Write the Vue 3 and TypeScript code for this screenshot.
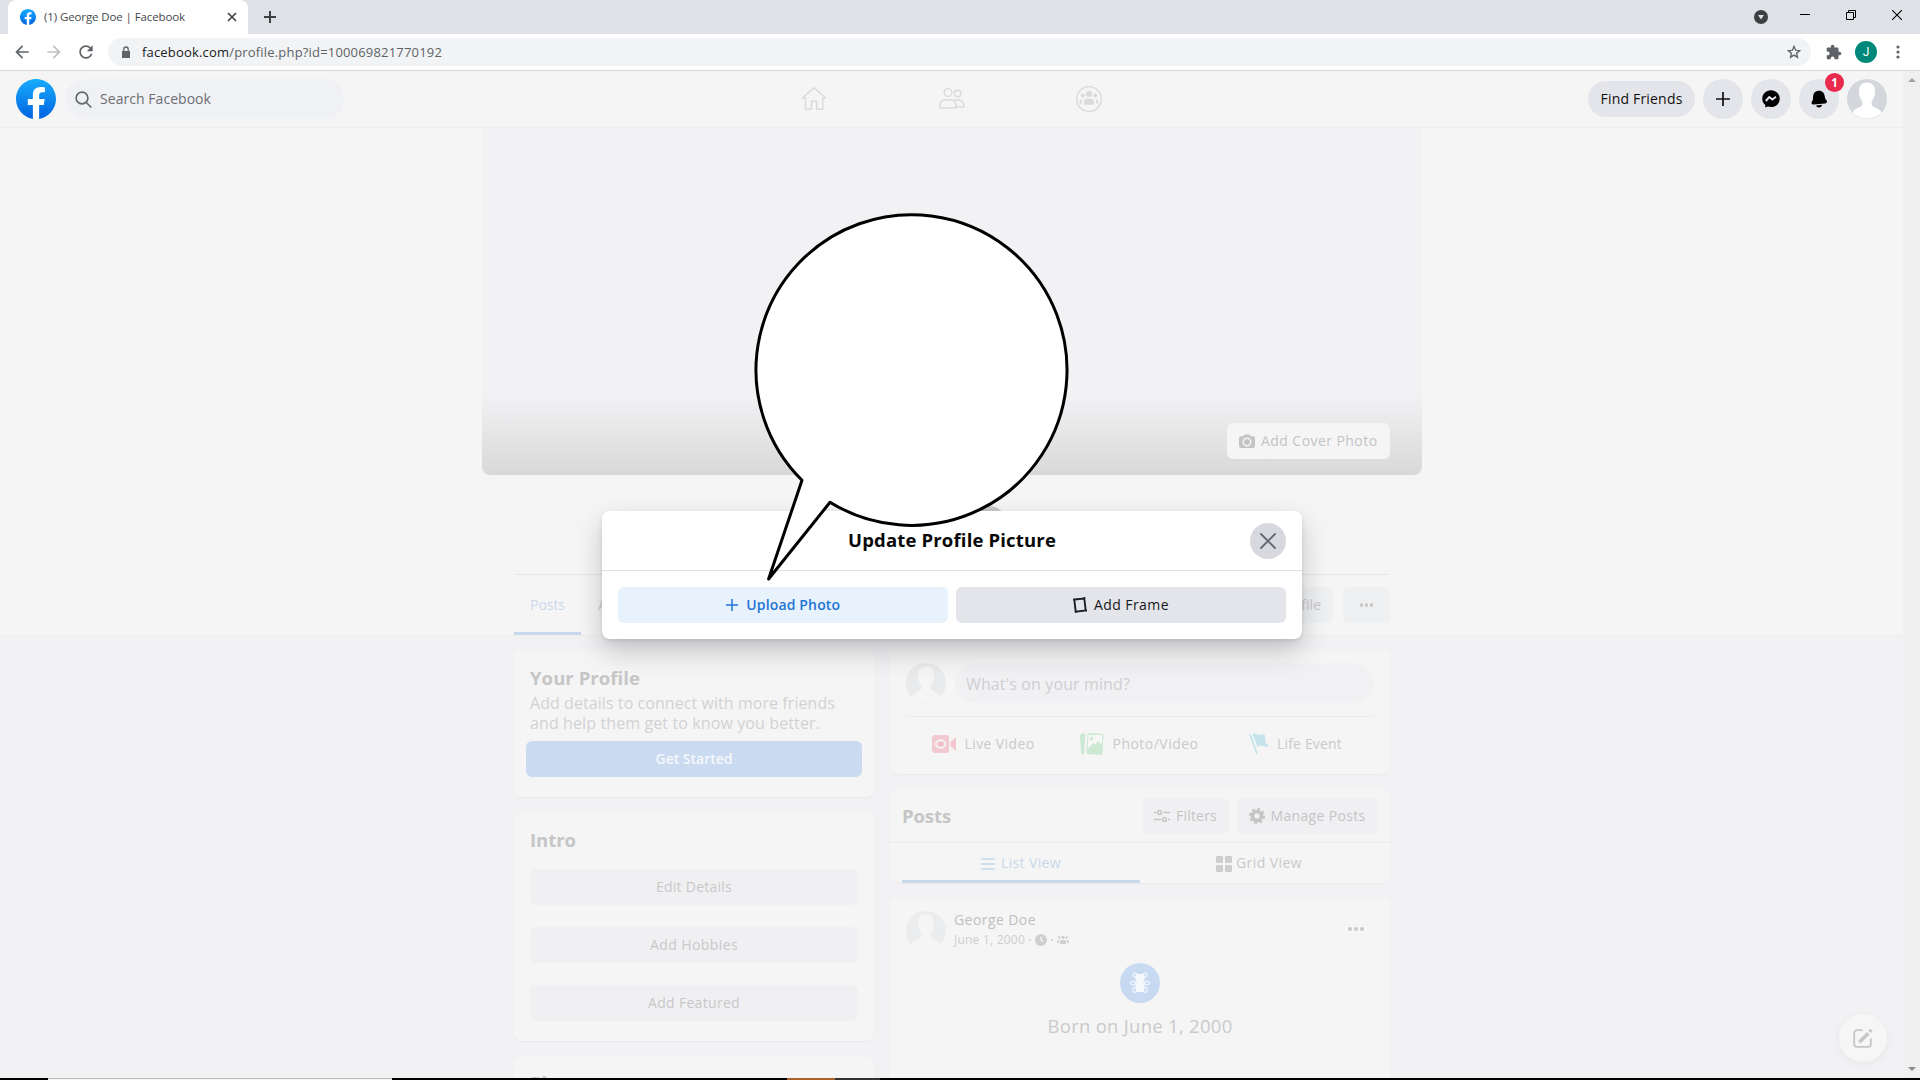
<script setup lang="ts">
interface Binding {
  value: number
}

// Tracks a label out (or in) so that it fills its designed width.
const vFit = {
  mounted(el: HTMLElement, binding: Binding) {
    const natural = el.getBoundingClientRect().width
    const count = (el.textContent ?? '').length
    if (count > 0) el.style.letterSpacing = `${(binding.value - natural) / count}px`
  },
}

const introActions = [
  { label: 'Edit Details', width: 76 },
  { label: 'Add Hobbies', width: 88 },
  { label: 'Add Featured', width: 92 },
]

const silhouette =
  'M20 3.5c-5 0-8 3-8 8.500 0 5.500 1.800 8.500 3.300 10.500 .5 3.500-.6 5-4 6.300-2.800 1.200-5 2.600-5.800 4.700a20 20 0 0 0 29 0c-.8-2.100-3-3.500-5.800-4.700-3.400-1.300-4.500-2.800-4-6.300 1.500-2 3.300-5 3.300-10.500 0-5.500-3-8.500-8-8.500z'
const fbMark =
  'M24 12.073c0-6.627-5.373-12-12-12s-12 5.373-12 12c0 5.990 4.388 10.954 10.125 11.854v-8.385H7.078v-3.470h3.047V9.430c0-3.007 1.792-4.669 4.533-4.669 1.312 0 2.686.235 2.686.235v2.953H15.830c-1.491 0-1.956.925-1.956 1.874v2.250h3.328l-.532 3.470h-2.796v8.385C19.612 23.027 24 18.062 24 12.073z'
</script>

<template>
  <div class="screen">
    <svg width="0" height="0" class="defs">
      <defs>
        <linearGradient id="fbg" x1="0" y1="0" x2="0" y2="1">
          <stop offset="0" stop-color="#18acfe" />
          <stop offset="1" stop-color="#0163e0" />
        </linearGradient>
      </defs>
    </svg>

    <div class="tabstrip">
      <div class="tab">
        <svg class="favicon" width="16" height="16" viewBox="0 0 24 24"><path fill="url(#fbg)" :d="fbMark" /></svg>
        <span v-fit="141" class="tab-title">(1) George Doe | Facebook</span>
        <svg class="tab-x" width="10" height="10" viewBox="0 0 10 10"><path d="M1 1l8 8M9 1l-8 8" stroke="#3c4043" stroke-width="1.600" /></svg>
      </div>
      <svg class="newtab" width="12" height="12" viewBox="0 0 12 12"><path d="M6 0v12M0 6h12" stroke="#3c4043" stroke-width="2" /></svg>
      <div class="window-buttons">
        <svg width="14" height="14" viewBox="0 0 14 14" class="w-drop"><circle cx="7" cy="7" r="7" fill="#3c4043" /><path d="M4 5h6L7 9.500z" fill="#dee1e6" /></svg>
        <svg width="10" height="10" viewBox="0 0 10 10" class="w-min"><path d="M0 4.500h10" stroke="#000" /></svg>
        <svg width="10" height="10" viewBox="0 0 10 10" class="w-max"><path d="M.5 2.500h7v7h-7zM2.500 2.500v-2h7v7h-2" fill="none" stroke="#000" /></svg>
        <svg width="10" height="10" viewBox="0 0 10 10" class="w-close"><path d="M0 0l10 10M10 0L0 10" stroke="#000" stroke-width="1.100" /></svg>
      </div>
    </div>

    <div class="toolbar">
      <svg class="t-back" width="20" height="20" viewBox="0 0 24 24" fill="#5f6368"><path d="M20 11H7.830l5.590-5.590L12 4l-8 8 8 8 1.410-1.410L7.830 13H20z" /></svg>
      <svg class="t-fwd" width="20" height="20" viewBox="0 0 24 24" fill="#bdc0c3"><path d="M4 11h12.170l-5.590-5.590L12 4l8 8-8 8-1.410-1.410L16.170 13H4z" /></svg>
      <svg class="t-reload" width="20" height="20" viewBox="0 0 24 24" fill="#5f6368"><path d="M17.650 6.350C16.200 4.900 14.210 4 12 4c-4.420 0-7.990 3.580-7.990 8s3.570 8 7.990 8c3.730 0 6.840-2.550 7.730-6h-2.080c-.82 2.330-3.040 4-5.650 4-3.310 0-6-2.690-6-6s2.690-6 6-6c1.660 0 3.140.69 4.220 1.780L13 11h7V4l-2.350 2.350z" /></svg>
      <div class="omnibox">
        <svg width="10" height="12" viewBox="0 0 10 12"><path d="M1 5h8v7H1z" fill="#5f6368" /><path d="M2.800 5V3.200a2.200 2.200 0 0 1 4.400 0V5" fill="none" stroke="#5f6368" stroke-width="1.300" /></svg>
        <span v-fit="300" class="url"><b>facebook.com</b>/profile.php?id=100069821770192</span>
        <svg class="star" width="16" height="16" viewBox="0 0 24 24" fill="#5f6368"><path fill-rule="evenodd" d="M23 9.240l-7.800-.62L12 1 8.800 8.630 1 9.240l6 5L5.200 22 12 17.870 18.800 22 17 14.240zM12 15.400l-3.760 2.270 1-4.280-3.320-2.880 4.380-.38L12 6.100l1.710 4.040 4.380.38-3.320 2.880 1 4.280z" /></svg>
      </div>
      <svg class="t-ext" width="16" height="16" viewBox="1 0 23 23" fill="#5f6368"><path d="M20.500 11H19V7c0-1.100-.9-2-2-2h-4V3.500C13 2.120 11.880 1 10.500 1S8 2.120 8 3.500V5H4c-1.100 0-1.990.9-1.990 2v3.800H3.500c1.490 0 2.700 1.210 2.700 2.700s-1.210 2.700-2.700 2.700H2V20c0 1.100.9 2 2 2h3.800v-1.500c0-1.490 1.210-2.700 2.700-2.700 1.490 0 2.700 1.210 2.700 2.700V22H17c1.100 0 2-.9 2-2v-4h1.500c1.380 0 2.500-1.120 2.500-2.500S21.880 11 20.500 11z" /></svg>
      <span class="profile-j">J</span>
      <svg class="t-menu" width="4" height="14" viewBox="0 0 4 14" fill="#5f6368"><circle cx="2" cy="2" r="1.600" /><circle cx="2" cy="7" r="1.600" /><circle cx="2" cy="12" r="1.600" /></svg>
    </div>

    <div class="viewport">
      <div class="page">
        <header class="topbar">
          <svg class="logo" width="40" height="40" viewBox="0 0 24 24"><circle cx="12" cy="12" r="11.500" fill="#fff" /><path fill="url(#fbg)" :d="fbMark" /></svg>
          <div class="search">
            <svg width="17" height="17" viewBox="0 0 17 17" fill="none" stroke="#65676b" stroke-width="1.700" stroke-linecap="round"><circle cx="7" cy="7" r="5.900" /><path d="M11.300 11.500l4.500 4.500" /></svg>
            <span v-fit="111">Search Facebook</span>
          </div>
          <nav class="nav" aria-label="Main">
            <svg width="26" height="26" viewBox="0 0 26 26" fill="none" stroke="#dadada" stroke-width="1.500" stroke-linejoin="round"><path d="M13 1.800L1.500 12h3v11.200h6v-8h5.200v8h6V12h3z" /></svg>
            <svg width="26" height="26" viewBox="0 0 26 26" fill="none" stroke="#dadada" stroke-width="1.400"><circle cx="9" cy="6.500" r="3.900" /><circle cx="18.700" cy="7.500" r="3.200" /><path d="M1 22c-.6-5.500 1.500-8.300 5-8.300h6c3.500 0 5.400 3 5 8.300zM15.500 14h4c3.800 0 5.700 2.500 5.300 7H17" /></svg>
            <svg width="28" height="28" viewBox="0 0 28 28"><circle cx="14" cy="14" r="12.400" fill="none" stroke="#dadada" stroke-width="1.400" /><g fill="#dadada"><circle cx="14" cy="9" r="3" /><circle cx="7.800" cy="10.500" r="2" /><circle cx="20.200" cy="10.500" r="2" /><path d="M9 19.800c-.6-4 .9-6 3-6h4c2.100 0 3.600 2 3 6zM4.700 18.500c-.4-3 .8-4.500 2.800-4.300-.8 1.200-1 2.600-.8 4.800zM23.300 18.500c.4-3-.8-4.500-2.800-4.300.8 1.200 1 2.600.8 4.800z" /></g></svg>
          </nav>
          <div class="account">
            <span class="find"><span v-fit="82">Find Friends</span></span>
            <span class="round"><svg width="14" height="14" viewBox="0 0 14 14"><path d="M7 0v14M0 7h14" stroke="#111" stroke-width="1.700" /></svg></span>
            <span class="round"><svg width="18" height="18" viewBox="0 0 18 18"><path d="M9 .3C4 .3.300 4 .3 8.700c0 2.700 1.100 4.800 3 6.400v2.500l2.600-1.100c1 .3 2 .5 3.100.5 5 0 8.700-3.600 8.700-8.300S14 .3 9 .3z" fill="#000" /><path d="M3.800 11l3.500-4 3 2.400L14 6.700" fill="none" stroke="#e4e6eb" stroke-width="1.900" stroke-linejoin="round" /></svg></span>
            <span class="round"><svg width="18" height="18" viewBox="0 0 18 18"><path d="M3 7.500C3 3.500 5.300.8 9 .8c3.400 0 5.500 2.300 5.800 5.700.2 2 .8 2.700 1.700 3.700 1 1.200.3 3-1.300 3.200L3.600 14.600C1.800 14.800.9 13 1.900 11.600 2.800 10.400 3 9.300 3 7.500zM6 15.400l6-.7c-.1 1.500-1.300 2.700-3 2.700-1.600 0-2.600-.8-3-2z" fill="#000" /></svg><i class="badge">1</i></span>
            <svg width="40" height="40" viewBox="0 0 40 40"><circle cx="20" cy="20" r="20" fill="#d3d6db" /><path :d="silhouette" fill="#fff" /></svg>
          </div>
        </header>

        <section class="profile">
          <div class="cover">
            <div class="cover-btn">
              <svg width="16" height="15" viewBox="0 0 16 15"><path fill-rule="evenodd" d="M5.500.5h5l1.300 1.700H14a2 2 0 0 1 2 2V12a2 2 0 0 1-2 2H2a2 2 0 0 1-2-2V4.200a2 2 0 0 1 2-2h2.200zM8 3.500a4.500 4.500 0 1 0 0 9 4.500 4.500 0 0 0 0-9z" fill="#c4c4c5" /><circle cx="8" cy="8" r="3" fill="#c4c4c5" /></svg>
              <span v-fit="116.500">Add Cover Photo</span>
            </div>
          </div>
          <div class="profile-head"><i class="cam-badge"></i></div>
          <div class="tabs">
            <span class="tab-posts"><span v-fit="35">Posts</span></span>
            <span class="tab-about">About</span>
            <span class="ghost edit"><span>Edit Profile</span></span>
            <span class="ghost more"><i></i><i></i><i></i></span>
          </div>
        </section>

        <main class="columns">
          <div class="left">
            <section class="card your">
              <h2><span v-fit="110">Your Profile</span></h2>
              <p><span v-fit="305">Add details to connect with more friends</span></p>
              <p><span v-fit="290">and help them get to know you better.</span></p>
              <div class="started"><span v-fit="77">Get Started</span></div>
            </section>
            <section class="card intro">
              <h2><span v-fit="46">Intro</span></h2>
              <div v-for="a in introActions" :key="a.label" class="action"><span v-fit="a.width">{{ a.label }}</span></div>
            </section>
            <section class="card photos"><h2>Photos</h2></section>
          </div>

          <div class="right">
            <section class="card composer">
              <div class="compose-row">
                <svg width="40" height="40" viewBox="0 0 40 40"><circle cx="20" cy="20" r="20" fill="#e9eaec" /><path :d="silhouette" fill="#f5f5f5" /></svg>
                <div class="mind"><span v-fit="164">What's on your mind?</span></div>
              </div>
              <div class="kinds">
                <svg width="24" height="24" viewBox="0 0 24 24"><path fill="#f0c9d1" d="M3 3h11a3 3 0 0 1 3 3v12a3 3 0 0 1-3 3H3a3 3 0 0 1-3-3V6a3 3 0 0 1 3-3zM18.300 10L24 5v14l-5.700-5z" /><ellipse cx="8.600" cy="12" rx="4.800" ry="3.700" fill="none" stroke="#f8f8f8" stroke-width="1.500" /><circle cx="8.600" cy="12" r="2.200" fill="#eebfc9" /></svg>
                <span v-fit="70">Live Video</span>
                <svg class="k-photo" width="24" height="24" viewBox="0 0 24 24"><path fill="#cbe8d2" d="M0 3.500Q.2 2 2 1.700L5.300 1 4 22.800H2.700Q1.400 22.800 1.200 21z" /><rect x="7" y="1.500" width="16" height="21" rx="1.800" transform="rotate(3 15 12)" fill="#cbe8d2" /><path d="M8.500 3h13.800l-.7 10-3.500-4.200-2.800 4-2-1.800-5.600 6z" fill="#f6f7f6" /><circle cx="11.500" cy="6.500" r="1.700" fill="#cbe8d2" /></svg>
                <span v-fit="86">Photo/Video</span>
                <svg class="k-flag" width="20" height="22" viewBox="0 0 20 22" fill="#c5e3ea"><path d="M0 1.500l1.800-.4 7 19.600-1.500.5zM3.500 1c3-2 5 3 9 .3l3.300.5.5 7.500 3.500 3.800c-4 2.500-7-3-11.300.8z" /></svg>
                <span v-fit="65" class="k-life">Life Event</span>
              </div>
            </section>

            <section class="card posts">
              <div class="posts-head">
                <h2><span v-fit="49">Posts</span></h2>
                <div class="pbtn filters">
                  <svg width="16" height="14" viewBox="0 0 16 14" fill="none" stroke="#c6c6c7" stroke-width="1.500"><circle cx="5.500" cy="3.500" r="1.900" /><path d="M9 3.500h7M0 3.500h2M0 10.500h7M14 10.500h2" /><circle cx="10.500" cy="10.500" r="1.900" /></svg>
                  <span v-fit="41">Filters</span>
                </div>
                <div class="pbtn manage">
                  <svg width="16" height="16" viewBox="0 0 16 16" fill="none" stroke="#c4c4c5"><circle cx="8" cy="8" r="4.500" stroke-width="3.600" /><circle cx="8" cy="8" r="7" stroke-width="2" stroke-dasharray="2.900 2.600" /></svg>
                  <span v-fit="95">Manage Posts</span>
                </div>
              </div>
              <div class="views">
                <div class="view on">
                  <svg width="14" height="12" viewBox="0 0 14 12"><path d="M0 1h14M0 6h14M0 11h14" stroke="#c8d8ec" stroke-width="1.600" /></svg>
                  <span v-fit="60">List View</span>
                </div>
                <div class="view">
                  <svg width="16" height="16" viewBox="0 0 16 16" fill="#cfcfcf"><rect width="7" height="7" rx="1" /><rect x="9" width="7" height="7" rx="1" /><rect y="9" width="7" height="7" rx="1" /><rect x="9" y="9" width="7" height="7" rx="1" /></svg>
                  <span v-fit="66">Grid View</span>
                </div>
              </div>
            </section>

            <section class="card post">
              <div class="author">
                <svg width="40" height="40" viewBox="0 0 40 40"><circle cx="20" cy="20" r="20" fill="#ebecee" /><path :d="silhouette" fill="#f5f5f5" /></svg>
                <div class="who">
                  <div class="name"><span v-fit="82">George Doe</span></div>
                  <div class="meta">
                    <span v-fit="71">June 1, 2000</span>
                    <i></i>
                    <svg width="12" height="12" viewBox="0 0 12 12"><circle cx="6" cy="6" r="6" fill="#cfcfd0" /><path d="M6 2.800V6l2 1.800" stroke="#f5f5f5" stroke-width="1.400" fill="none" /></svg>
                    <i></i>
                    <svg width="12" height="10" viewBox="0 0 12 10" fill="#cfcfd0"><circle cx="6" cy="2.300" r="1.600" /><circle cx="2.300" cy="2.500" r="1.200" /><circle cx="9.700" cy="2.500" r="1.200" /><path d="M3 9V7.200c0-1.700 1-2.200 2-2.200h2c1 0 2 .5 2 2.200V9zM0 8c0-2 .3-3.200 2.300-3.200C1.800 5.700 1.800 7 1.900 8zM12 8c0-2-.3-3.200-2.300-3.200.5.900.5 2.200.4 3.200z" /></svg>
                  </div>
                </div>
                <div class="dots"><i></i><i></i><i></i></div>
              </div>
              <svg class="teddy" width="40" height="40" viewBox="0 0 40 40"><circle cx="20" cy="20" r="20" fill="#c8daf2" /><g fill="none" stroke="#f6f8fb" stroke-width="1.100"><circle cx="15" cy="12" r="1.900" /><circle cx="25" cy="12" r="1.900" /><ellipse cx="13.200" cy="20" rx="2.600" ry="1.700" /><ellipse cx="26.800" cy="20" rx="2.600" ry="1.700" /><ellipse cx="14.800" cy="27" rx="1.900" ry="2.400" /><ellipse cx="25.200" cy="27" rx="1.900" ry="2.400" /></g><path d="M16 11h8q1.500 3.500.3 6.500L23.500 19q2 4 .5 8l-1 2h-6l-1-2q-1.500-4 .5-8l-.8-1.500Q14.500 14.500 16 11z" fill="#f6f8fb" /></svg>
              <div class="born"><span v-fit="185">Born on June 1, 2000</span></div>
            </section>
          </div>
        </main>
      </div>
      <div class="scrollbar"><i class="up"></i><i class="down"></i></div>
    </div>

    <div class="taskbar"><i class="light"></i><i class="orange"></i><i class="grey"></i></div>

    <div class="fab">
      <svg width="20" height="20" viewBox="0 0 20 20" fill="none" stroke="#c6c6c6"><path d="M9.500 2.200H4A2.800 2.800 0 0 0 1.200 5v11A2.800 2.800 0 0 0 4 18.800h11a2.800 2.800 0 0 0 2.800-2.800v-5.500" stroke-width="1.800" /><path d="M6.300 14.200l9-9" stroke-width="3.600" /><path d="M16.600 3.800l1.800-1.800" stroke-width="3.600" /></svg>
    </div>

    <div class="modal">
      <div class="modal-head">
        <h1><span v-fit="208">Update Profile Picture</span></h1>
        <div class="close"><svg width="16" height="16" viewBox="0 0 16 16"><path d="M1 1l14 14M15 1L1 15" stroke="#606770" stroke-width="1.800" stroke-linecap="round" /></svg></div>
      </div>
      <div class="modal-body">
        <div class="mbtn upload">
          <svg width="12" height="12" viewBox="0 0 12 12"><path d="M6 0v12M0 6h12" stroke="#2374d5" stroke-width="1.500" /></svg>
          <span v-fit="94">Upload Photo</span>
        </div>
        <div class="mbtn frame">
          <svg width="14" height="16" viewBox="0 0 14 16"><path d="M1.300 2.500L11.300 1.500 12.700 13.500 2.700 14.700zM0 2.600l1.500-.2M11.300 0v1.600M12.500 13.500h1.500M2.700 14.500v1.500" fill="none" stroke="#1c1e21" stroke-width="1.900" /></svg>
          <span v-fit="75">Add Frame</span>
        </div>
      </div>
    </div>

    <svg class="bubble" width="340" height="390" viewBox="740 200 340 390">
      <path d="M802 480.300A155.500 155.300 0 1 1 830 502.300L768.600 579z" fill="#fff" stroke="#000" stroke-width="3" stroke-linejoin="round" />
    </svg>
  </div>
</template>

<style>
body {
  margin: 0;
  overflow: hidden;
}
</style>

<style scoped>
* {
  box-sizing: border-box;
}
.screen {
  position: relative;
  width: 1920px;
  height: 1080px;
  overflow: hidden;
  display: flex;
  flex-direction: column;
  background: #f2f2f5;
  font-family: 'Open Sans', 'Noto Sans', sans-serif;
  font-size: 14px;
  white-space: nowrap;
}
svg {
  display: block;
  flex: none;
}
span {
  flex: none;
}
h1,
h2,
p {
  margin: 0;
}
.defs {
  position: absolute;
}

/* Optical centring: labels sit a pixel above the box's middle. */
.search span,
.find span,
.cover-btn span,
.tab-about,
.edit span,
.started span,
.action span,
.kinds span,
.pbtn span,
.view span,
.mbtn span {
  margin-bottom: 2px;
}

.tabstrip {
  height: 34px;
  flex: none;
  background: #dee1e6;
  display: flex;
  align-items: center;
  padding-left: 8px;
}
.tab {
  width: 240px;
  height: 34px;
  background: #fff;
  border-radius: 8px 8px 0 0;
  display: flex;
  align-items: center;
  padding-left: 12px;
}
.tab-title {
  margin-left: 8px;
  margin-bottom: 1px;
  font-size: 11.500px;
  color: #45494d;
}
.tab-x {
  margin-left: auto;
  margin-right: 11px;
}
.newtab {
  margin-left: 16px;
}
.window-buttons {
  margin-left: auto;
  display: flex;
  align-items: center;
}
.w-drop {
  margin-right: 32px;
}
.w-min,
.w-max,
.w-close {
  margin-bottom: 5px;
}
.w-min,
.w-max {
  margin-right: 36px;
}
.w-close {
  margin-right: 18px;
}

.toolbar {
  height: 37px;
  flex: none;
  background: #fff;
  border-bottom: 1px solid #d6d7d9;
  display: flex;
  align-items: center;
  padding-left: 12px;
}
.t-fwd {
  margin-left: 12px;
}
.t-reload {
  margin-left: 12px;
}
.omnibox {
  margin-left: 12px;
  width: 1703px;
  height: 28px;
  border-radius: 14px;
  background: #f1f3f4;
  display: flex;
  align-items: center;
  padding: 0 9px 0 13px;
}
.url {
  margin-left: 11px;
  font-size: 13px;
  color: #5f6368;
}
.url b {
  font-weight: 400;
  color: #202124;
}
.star {
  margin-left: auto;
}
.t-ext {
  margin-left: 15px;
}
.profile-j {
  margin-left: 13px;
  width: 22px;
  height: 22px;
  border-radius: 50%;
  background: #00897b;
  color: #fff;
  font: 12px/22px Roboto, sans-serif;
  text-align: center;
}
.t-menu {
  margin-left: 19px;
}

.viewport {
  height: 1007px;
  flex: none;
  display: flex;
  overflow: hidden;
}
.page {
  width: 1903px;
  flex: none;
}
.scrollbar {
  width: 17px;
  background: #f0f0f1;
  display: flex;
  flex-direction: column;
  justify-content: space-between;
  align-items: center;
  padding: 7px 0 7px;
}
.up,
.down {
  border: 4px solid transparent;
}
.up {
  border-top-width: 0;
  border-bottom-color: #a3a3a3;
}
.down {
  border-bottom-width: 0;
  border-top-color: #8b8b8b;
}

.topbar {
  height: 57px;
  background: #f5f5f5;
  border-bottom: 1px solid #eeeeef;
  display: flex;
  align-items: center;
  padding: 0 16px;
}
.search {
  margin-left: 9px;
  width: 279px;
  height: 40px;
  border-radius: 20px;
  background: #f0f1f5;
  display: flex;
  align-items: center;
  padding-left: 10px;
  color: #6c6e73;
}
.search span {
  margin-left: 8px;
}
.nav {
  margin-left: 457px;
  display: flex;
  align-items: center;
  gap: 112px;
}
.nav svg:nth-child(3) {
  margin-left: -2px;
}
.account {
  margin-left: auto;
  display: flex;
  align-items: center;
  gap: 8px;
}
.find {
  height: 36px;
  width: 107px;
  border-radius: 18px;
  background: #e4e5ea;
  display: flex;
  align-items: center;
  justify-content: center;
  font-weight: 500;
  color: #111;
}
.round {
  position: relative;
  width: 40px;
  height: 40px;
  border-radius: 50%;
  background: #e4e5ea;
  display: flex;
  align-items: center;
  justify-content: center;
}
.badge {
  position: absolute;
  top: -6px;
  left: 26px;
  width: 19px;
  height: 19px;
  border-radius: 50%;
  background: #ea294c;
  color: #fff;
  font: 700 11.500px/19px 'Open Sans', sans-serif;
  text-align: center;
}

.profile {
  height: 508px;
  background: #f5f5f5;
  border-bottom: 1px solid #eeeeef;
}
.cover {
  width: 940px;
  height: 347px;
  margin-left: 482px;
  border-radius: 0 0 8px 8px;
  background: linear-gradient(#f2f2f5 0, #f2f2f5 267px, #e4e4e5 310px, #d8d8d8 347px);
  display: flex;
  align-items: flex-end;
  justify-content: flex-end;
  padding: 0 32px 16px 0;
}
.cover-btn {
  width: 163px;
  height: 36px;
  border-radius: 6px;
  background: #f5f5f5;
  display: flex;
  align-items: center;
  padding-left: 12px;
  gap: 6px;
  font-weight: 500;
  color: #c4c4c5;
}
.profile-head {
  position: relative;
  height: 100px;
  margin: 0 513px 0 514px;
  border-bottom: 1px solid #e7e7e8;
}
.cam-badge {
  position: absolute;
  left: 457px;
  top: 31px;
  width: 36px;
  height: 36px;
  border-radius: 50%;
  background: #c9c9c9;
}
.tabs {
  height: 60px;
  margin: 0 513px 0 514px;
  display: flex;
  align-items: center;
  font-weight: 500;
}
.tab-posts {
  width: 67px;
  height: 60px;
  border-bottom: 3px solid #c8d9ee;
  display: flex;
  align-items: center;
  justify-content: center;
  color: #ccd9eb;
  padding-top: 1px;
}
.tab-about {
  margin-left: 17px;
  color: #cfcfd0;
}
.ghost {
  height: 36px;
  border-radius: 6px;
  background: #eff0f2;
  display: flex;
  align-items: center;
  justify-content: center;
}
.edit {
  margin-left: auto;
  width: 118px;
  justify-content: flex-end;
  padding-right: 12px;
  color: #c8c8c9;
}
.more {
  margin-left: 10px;
  width: 47px;
  gap: 1.500px;
}
.more i,
.dots i {
  width: 4px;
  height: 4px;
  border-radius: 50%;
  background: #c8c8c9;
}
.more i {
  width: 3.500px;
  height: 3.500px;
}

.columns {
  display: flex;
  gap: 16px;
  padding: 15px 0 0 514px;
}
.left {
  width: 360px;
}
.right {
  width: 500px;
}
.card {
  background: #f5f5f5;
  border-radius: 8px;
  box-shadow: 0 1px 2px rgba(0, 0, 0, 0.040);
  margin-bottom: 16px;
}
h2 {
  font-size: 18.500px;
  font-weight: 700;
  line-height: 24px;
  color: #c6c6c7;
}
.your {
  height: 146px;
  margin-bottom: 15px;
  padding: 15px 16px 0;
}
.your p {
  font-size: 16px;
  line-height: 20px;
  color: #d2d2d3;
}
.your h2 + p {
  margin-top: 3px;
}
.started {
  margin: 8px -4px 0;
  height: 36px;
  border-radius: 6px;
  background: #c9daf1;
  color: #f7f8fb;
  font-weight: 600;
  display: flex;
  align-items: center;
  justify-content: center;
}
.intro {
  height: 229px;
  padding: 16px 16px 0;
}
.intro h2 {
  margin-bottom: 17px;
}
.action {
  height: 36px;
  margin-bottom: 22px;
  border-radius: 6px;
  background: #f0f0f2;
  color: #c8c8c9;
  font-weight: 500;
  display: flex;
  align-items: center;
  justify-content: center;
}
.photos {
  height: 200px;
  padding: 14px 16px;
}

.composer {
  height: 123px;
  padding: 12px 16px 0;
}
.compose-row {
  height: 54px;
  border-bottom: 1px solid #ececed;
  display: flex;
  align-items: flex-start;
}
.mind {
  margin-left: 9px;
  width: 419px;
  height: 40px;
  border-radius: 20px;
  background: #f1f1f4;
  color: #cfcfd0;
  font-size: 16px;
  display: flex;
  align-items: center;
  padding: 2px 0 0 11px;
}
.kinds {
  height: 54px;
  display: flex;
  align-items: center;
  padding-left: 26px;
  font-weight: 500;
  color: #cacacb;
}
.kinds span {
  margin-left: 8.500px;
}
.k-photo {
  margin-left: 45.500px;
}
.k-flag {
  margin-left: 50.500px;
}
.kinds .k-life {
  margin-left: 8px;
}
.posts {
  height: 93px;
}
.posts-head {
  height: 53px;
  border-bottom: 1px solid #ebebec;
  display: flex;
  align-items: center;
  padding: 0 12px;
}
.pbtn {
  height: 36px;
  border-radius: 6px;
  background: #f0f0f2;
  display: flex;
  align-items: center;
  justify-content: center;
  gap: 6px;
  font-weight: 500;
  color: #c4c4c5;
}
.filters {
  margin-left: auto;
  width: 86px;
  margin-right: 8px;
  padding-right: 1px;
}
.manage {
  width: 141px;
  padding-right: 1px;
}
.views {
  height: 40px;
  display: flex;
  padding: 0 12px;
}
.view {
  width: 238px;
  display: flex;
  align-items: center;
  justify-content: center;
  gap: 4px;
  font-weight: 500;
  color: #cacacb;
  padding-top: 1px;
}
.on {
  border-bottom: 3px solid #c9d8ea;
  color: #c8d8ec;
  padding-top: 4px;
  gap: 6px;
}
.post {
  height: 220px;
  padding: 12px 16px 0;
}
.author {
  display: flex;
}
.who {
  margin-left: 8px;
}
.name {
  line-height: 20px;
  margin-top: -1px;
  font-weight: 500;
  color: #c0c0c1;
}
.meta {
  display: flex;
  align-items: center;
  line-height: 18px;
  margin-top: 1px;
  font-size: 12px;
  color: #cecece;
}
.meta i {
  width: 2px;
  height: 2px;
  border-radius: 50%;
  background: #cecece;
  margin: 0 4px;
}
.dots {
  margin: 16px 10px 0 auto;
  display: flex;
  gap: 2px;
}
.teddy {
  margin: 12px auto 0;
}
.born {
  margin-top: 10px;
  text-align: center;
  font-size: 18.500px;
  line-height: 26px;
  color: #cacacb;
}

.taskbar {
  height: 2px;
  background: #000;
  display: flex;
}
.taskbar i {
  height: 2px;
}
.light {
  margin-left: 48px;
  width: 344px;
  background: linear-gradient(#bcbcbc 1px, #f4f4f4 1px);
}
.orange {
  margin-left: 395px;
  width: 48px;
  background: #a9602b;
}
.grey {
  width: 45px;
  background: #333;
}

.fab {
  position: absolute;
  left: 1839px;
  top: 1014px;
  width: 48px;
  height: 48px;
  border-radius: 50%;
  background: #f6f6f6;
  box-shadow: 0 2px 10px rgba(0, 0, 0, 0.050);
  display: flex;
  align-items: center;
  justify-content: center;
}

.modal {
  position: absolute;
  left: 602px;
  top: 511px;
  width: 700px;
  height: 128px;
  border-radius: 8px;
  background: #fff;
  box-shadow: 0 12px 28px rgba(0, 0, 0, 0.200), 0 2px 4px rgba(0, 0, 0, 0.100);
}
.modal-head {
  height: 60px;
  border-bottom: 1px solid #dfe0e3;
  display: flex;
  align-items: center;
  justify-content: flex-end;
}
h1 {
  margin: 0 194px 2px 0;
  font-size: 18.500px;
  font-weight: 700;
  line-height: 26px;
  color: #080808;
}
.close {
  width: 36px;
  height: 36px;
  border-radius: 50%;
  background: #d8d9df;
  margin-right: 16px;
  display: flex;
  align-items: center;
  justify-content: center;
}
.modal-body {
  display: flex;
  gap: 8px;
  padding: 16px 16px 0;
}
.mbtn {
  width: 330px;
  height: 36px;
  border-radius: 6px;
  display: flex;
  align-items: center;
  justify-content: center;
}
.upload {
  background: #e7f2fd;
  color: #2374d5;
  font-weight: 600;
  gap: 8.500px;
}
.frame {
  background: #e4e5ea;
  color: #16181b;
  font-weight: 500;
  gap: 7px;
}
.bubble {
  position: absolute;
  left: 740px;
  top: 200px;
}
</style>
